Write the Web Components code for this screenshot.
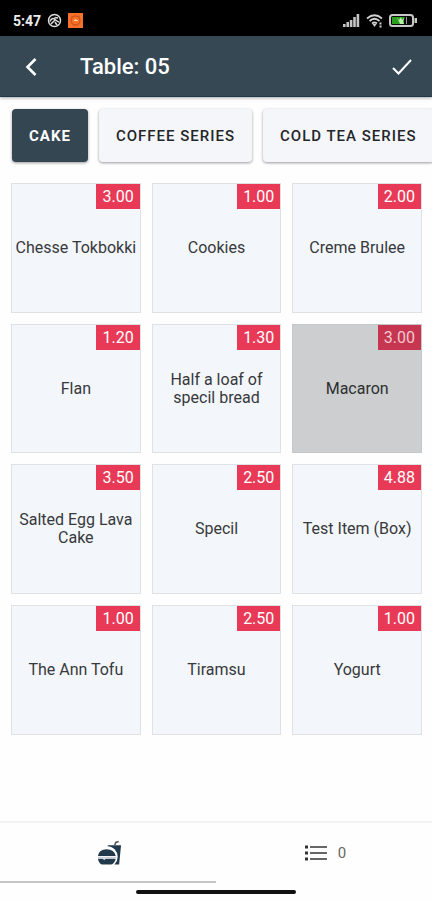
<!DOCTYPE html>
<html lang="en">
<head>
<meta charset="utf-8">
<meta name="viewport" content="width=device-width, initial-scale=1">
<title>Table: 05</title>
<style>
  html, body { margin: 0; height: 100%; }
  body { font-family: Roboto, "Liberation Sans", sans-serif; background: #fefefe; color: #303236; }
</style>
</head>
<body>
<pos-app></pos-app>
<script>
const define = (name, html, setup) => customElements.define(name, class extends HTMLElement {
  connectedCallback() {
    if (this.shadowRoot) return;
    const root = this.attachShadow({ mode: 'open' });
    root.innerHTML = html;
    if (setup) setup(this, root);
  }
});

define('status-bar', `
<style>
  :host { display: flex; align-items: center; justify-content: space-between; height: 36px; padding: 5px 15px 0 13px; box-sizing: border-box; background: #000; color: #eee; flex: none; }
  div { display: flex; align-items: center; gap: 6px; }
  .time { font-size: 14px; line-height: 16px; font-weight: 700; }
  svg { display: block; }
</style>
<div>
  <span class="time">5:47</span>
  <svg width="15" height="15" viewBox="0 0 15 15" fill="none" stroke="#ddd" stroke-width="1.5"><circle cx="7.5" cy="7.5" r="6"/><path d="M3 8.500Q5 4 8 6.500T12 9M4 11 8 7M7.500 4.500 11 5M8 9l2 3"/></svg>
  <svg width="15" height="15" viewBox="0 0 15 15"><path fill="#f8702a" d="M0 0h15v15H0z"/><circle cx="7.5" cy="7.5" r="4.500" fill="none" stroke="#d4551a" stroke-width="1.4"/><path d="M3 3l2 1M12 3l-2 1" stroke="#d4551a"/><path d="M6 7.500h4M7.500 6v1.500" stroke="#ffd0a8" stroke-width="1.2"/></svg>
</div>
<div>
  <svg width="17" height="13" viewBox="0 0 17 13" fill="#c4c4c4"><path d="M0 10h2.600v3H0zM3.400 8H6v5H3.400zM6.800 6h2.600v7H6.800zM10.200 3h2.600v10h-2.600zM13.600 0h2.600v13h-2.600z"/></svg>
  <svg width="17" height="14" viewBox="0 0 17 14" fill="none" stroke="#d0d0d0" stroke-width="1.7"><path d="M1 4.500Q8.500-2 16 4.500M3.500 7Q8.500 2.500 13.500 7M6 9.500Q8.500 7.500 11 9.500"/><path d="M6.500 10h4l-2 3z" fill="#d0d0d0" stroke="none"/><path d="M14.500 8.500v2M14.500 11.500v2" stroke-width="2"/></svg>
  <svg width="28" height="13" viewBox="0 0 28 13"><rect x="1" y="1" width="23" height="11" rx="2.500" fill="#050805" stroke="#c8c8c8" stroke-width="2"/><path d="M25.500 4H28v5h-2.500z" fill="#c8c8c8"/><path d="M3 3h12v7H3z" fill="#2c9f20"/><path d="M8 3l2 3 2-3 1 3 3-3-2 4 1 3h-4z" fill="#b9edaa"/><path d="M17.500 3v7" stroke="#999"/></svg>
</div>`);

define('app-header', `
<style>
  :host { display: flex; align-items: center; height: 61px; padding: 2px 20px 0; box-sizing: border-box; background: #364854; color: #fff; border-bottom: 1px solid #22384a; box-shadow: 0 1px 3px rgba(0,0,0,.35); flex: none; }
  h1 { flex: 1; margin: 0 0 0 36px; font-size: 22px; line-height: 28px; font-weight: 500; }
  button { padding: 0; border: 0; background: none; color: inherit; }
  svg { display: block; fill: none; stroke: currentColor; }
</style>
<button aria-label="Back"><svg width="24" height="24" viewBox="0 0 24 24" stroke-width="2.6"><path d="M15.500 4 7.500 12l8 8"/></svg></button>
<h1><slot></slot></h1>
<button aria-label="Confirm"><svg width="20" height="20" viewBox="0 0 20 20" stroke-width="2"><path d="M1 11l5.500 5.500L19 3"/></svg></button>`);

define('category-tab', `
<style>
  :host { display: block; flex: none; }
  button { height: 53px; padding: 0 17px; border: 0; border-radius: 4px; background: #f4f6f9; color: #242629; font: 500 15px/20px Roboto, "Liberation Sans", sans-serif; letter-spacing: 1px; white-space: nowrap; box-shadow: 0 1px 3px rgba(0,0,0,.4); }
  :host([selected]) button { background: #344652; color: #fff; font-weight: 700; }
</style>
<button><slot></slot></button>`, (host, root) => {
  root.querySelector('button').setAttribute('aria-pressed', host.hasAttribute('selected'));
});

define('category-tabs', `
<style>
  :host { display: flex; gap: 11px; padding: 12px 0 21px 12px; overflow: hidden; flex: none; }
</style>
<slot></slot>`);

define('menu-item', `
<style>
  :host { display: block; aspect-ratio: 1; min-width: 0; }
  button { position: relative; display: flex; align-items: center; justify-content: center; width: 100%; height: 100%; padding: 0 2px; box-sizing: border-box; border: 1px solid #dfe1e3; background: #f3f6fa; color: #37393c; font: 400 16px/18px Roboto, "Liberation Sans", sans-serif; text-align: center; }
  .price { position: absolute; top: 0; right: 0; padding: 0 6px; font-size: 16px; line-height: 25px; background: #e83a56; color: #fff; }
  :host([pressed]) button { background: #cccecf; border-color: #c5c7c9; color: #2c2e30; }
  :host([pressed]) .price { background: #c63650; color: #f2c9d0; }
</style>
<button><span><slot></slot></span><span class="price"></span></button>`, (host, root) => {
  root.querySelector('.price').textContent = host.getAttribute('price');
});

define('menu-grid', `
<style>
  :host { display: grid; grid-template-columns: repeat(3, minmax(0, 1fr)); gap: 11px; padding: 0 10px 0 11px; align-content: start; flex: 1; }
</style>
<slot></slot>`);

define('bottom-tabs', `
<style>
  :host { display: block; flex: none; border-top: 2px solid #f3f3f3; }
  nav { display: grid; grid-template-columns: 1fr 1fr; height: 60px; }
  button { display: flex; align-items: center; justify-content: center; gap: 11px; padding: 2px 0 0 3px; border: 0; border-bottom: 2px solid transparent; background: none; color: #666; font: 400 15px/20px Roboto, "Liberation Sans", sans-serif; }
  button[aria-current] { border-bottom-color: #c4c4c4; }
  svg { display: block; }
  .home { width: 37%; height: 4px; margin: 7px auto 6px; border-radius: 2px; background: #111; }
</style>
<nav>
  <button aria-label="Menu" aria-current="page"><svg width="25" height="26" viewBox="0 0 26 26"><g fill="#22394b"><path d="M11 5h14l-2 20h-5z"/><path d="M18.500 5l1-3 3-1" fill="none" stroke="#555" stroke-width="1.6"/></g><circle cx="10.500" cy="17" r="11" fill="#fefefe"/><path d="M1 16Q2 9 10 9t9.500 7zM1 19h18.500Q18 25 14 25H6Q2 25 1 19z" fill="#22394b"/><path d="M1 17.500h19" stroke="#b5c0c8" stroke-width="1"/><path d="M5 18h5l-2.500 2.500z" fill="#d9e1e6"/></svg></button>
  <button aria-label="Order list, 0 items"><svg width="22" height="16" viewBox="0 0 22 16"><path d="M5 2h17M5 8h17M5 14h17" stroke="#666" stroke-width="2"/><path d="M0 2h3M0 8h3M0 14h3" stroke="#333" stroke-width="3"/></svg><span>0</span></button>
</nav>
<div class="home"></div>`);

define('pos-app', `
<style>
  :host { display: flex; flex-direction: column; min-height: 100vh; }
</style>
<status-bar></status-bar>
<app-header>Table: 05</app-header>
<category-tabs>
  <category-tab selected>CAKE</category-tab>
  <category-tab>COFFEE SERIES</category-tab>
  <category-tab>COLD TEA SERIES</category-tab>
</category-tabs>
<menu-grid>
  <menu-item price="3.00">Chesse Tokbokki</menu-item>
  <menu-item price="1.00">Cookies</menu-item>
  <menu-item price="2.00">Creme Brulee</menu-item>
  <menu-item price="1.20">Flan</menu-item>
  <menu-item price="1.30">Half a loaf of specil bread</menu-item>
  <menu-item price="3.00" pressed>Macaron</menu-item>
  <menu-item price="3.50">Salted Egg Lava Cake</menu-item>
  <menu-item price="2.50">Specil</menu-item>
  <menu-item price="4.88">Test Item (Box)</menu-item>
  <menu-item price="1.00">The Ann Tofu</menu-item>
  <menu-item price="2.50">Tiramsu</menu-item>
  <menu-item price="1.00">Yogurt</menu-item>
</menu-grid>
<bottom-tabs></bottom-tabs>`);
</script>
</body>
</html>
